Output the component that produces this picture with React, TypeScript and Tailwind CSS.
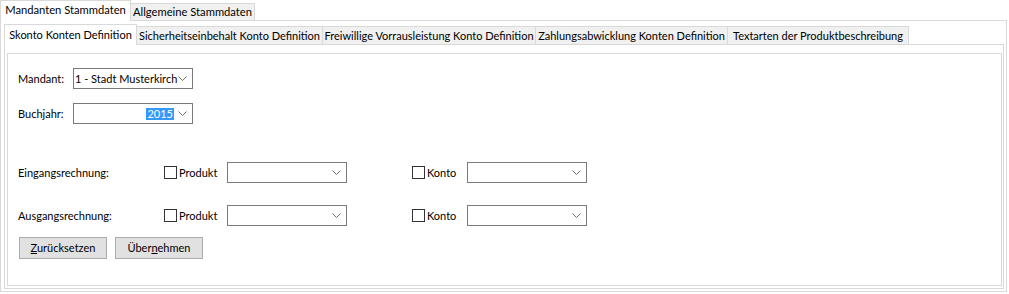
import React from 'react';

const Chevron = () => (
  <svg width="9" height="5" viewBox="0 0 9 5" className="shrink-0">
    <polyline points="0.5,0.5 4.5,4.5 8.5,0.5" fill="none" stroke="#707070" strokeWidth="1" />
  </svg>
);

const Select = ({ children, right = false }: { children?: React.ReactNode; right?: boolean }) => (
  <div className="w-[120px] h-[21px] border border-[#7a7a7a] bg-white flex items-center pl-[1px] pr-[5px] shrink-0">
    <div className={`flex-1 flex items-center overflow-hidden whitespace-nowrap ${right ? 'justify-end pr-[4px]' : ''}`}>
      {children}
    </div>
    <Chevron />
  </div>
);

const Check = ({ label }: { label: string }) => (
  <div className="flex items-center whitespace-nowrap">
    <div className="w-[13px] h-[13px] border border-[#333333] bg-white shrink-0" />
    <span className="ml-[2px]">{label}</span>
  </div>
);

const outerTabs = ['Mandanten Stammdaten', 'Allgemeine Stammdaten'];
const innerTabs = [
  { label: 'Skonto Konten Definition', w: 133 },
  { label: 'Sicherheitseinbehalt Konto Definition', w: 186 },
  { label: 'Freiwillige Vorrausleistung Konto Definition', w: 213 },
  { label: 'Zahlungsabwicklung Konten Definition', w: 192 },
  { label: 'Textarten der Produktbeschreibung', w: 181 },
];

export default function App() {
  return (
    <div
      className="w-[1009px] h-[294px] bg-white text-[11px] leading-[16px] text-black overflow-hidden whitespace-nowrap"
      style={{ fontFamily: '"Segoe UI", Lato, Arial, sans-serif' }}
    >
      {/* outer tab strip */}
      <div className="flex items-end h-[20px] relative z-10">
        <div className="w-[131px] h-[21px] -mb-px bg-white border-t border-l border-r border-[#d9d9d9] flex items-center justify-center pb-[2px] text-[11.2px]">
          {outerTabs[0]}
        </div>
        <div className="w-[124px] h-[17px] bg-[#f0f0f0] border-t border-r border-[#d9d9d9] flex items-center justify-center text-[11.2px]">
          {outerTabs[1]}
        </div>
      </div>

      <div className="w-[1007px] h-[272px] border border-[#d9d9d9] pl-[3px] pt-[3px]">
        {/* inner tab strip */}
        <div className="flex items-end h-[20px] relative z-10">
          {innerTabs.map((t, i) =>
            i === 0 ? (
              <div
                key={t.label}
                className="h-[21px] -mb-px bg-white border-t border-l border-r border-[#d9d9d9] flex items-center justify-center pb-[1px] shrink-0"
                style={{ width: t.w }}
              >
                {t.label}
              </div>
            ) : (
              <div
                key={t.label}
                className="h-[18px] bg-[#f0f0f0] border-t border-r border-[#d9d9d9] flex items-center justify-center shrink-0"
                style={{ width: t.w }}
              >
                {t.label}
              </div>
            )
          )}
        </div>

        <div className="w-[1000px] h-[245px] border border-[#d9d9d9] pl-[2px] pr-[1px] pt-[8px] pb-[2px]">
          <div className="h-full border border-[#d9d9d9] pl-[10px] pt-[14px]">
            <div className="flex items-center">
              <span className="w-[55px] shrink-0">Mandant:</span>
              <Select>1 - Stadt Musterkirch</Select>
            </div>

            <div className="flex items-center mt-[14px]">
              <span className="w-[55px] shrink-0">Buchjahr:</span>
              <Select right>
                <span className="bg-[#3399ff] text-white px-[1px] leading-[12px]">2015</span>
              </Select>
            </div>

            <div className="flex items-center mt-[38px]">
              <span className="w-[146px] shrink-0">Eingangsrechnung:</span>
              <div className="w-[63px] shrink-0">
                <Check label="Produkt" />
              </div>
              <Select />
              <div className="w-[65px] shrink-0" />
              <div className="w-[55px] shrink-0">
                <Check label="Konto" />
              </div>
              <Select />
            </div>

            <div className="flex items-center mt-[22px]">
              <span className="w-[146px] shrink-0">Ausgangsrechnung:</span>
              <div className="w-[63px] shrink-0">
                <Check label="Produkt" />
              </div>
              <Select />
              <div className="w-[65px] shrink-0" />
              <div className="w-[55px] shrink-0">
                <Check label="Konto" />
              </div>
              <Select />
            </div>

            <div className="flex items-center gap-[8px] mt-[11px] pl-[1px]">
              <button className="w-[88px] h-[22px] bg-[#e1e1e1] border border-[#adadad] flex items-center justify-center">
                <span>
                  <span className="underline">Z</span>urücksetzen
                </span>
              </button>
              <button className="w-[88px] h-[22px] bg-[#e1e1e1] border border-[#adadad] flex items-center justify-center">
                <span>
                  Über<span className="underline">n</span>ehmen
                </span>
              </button>
            </div>
          </div>
        </div>
      </div>
    </div>
  );
}
